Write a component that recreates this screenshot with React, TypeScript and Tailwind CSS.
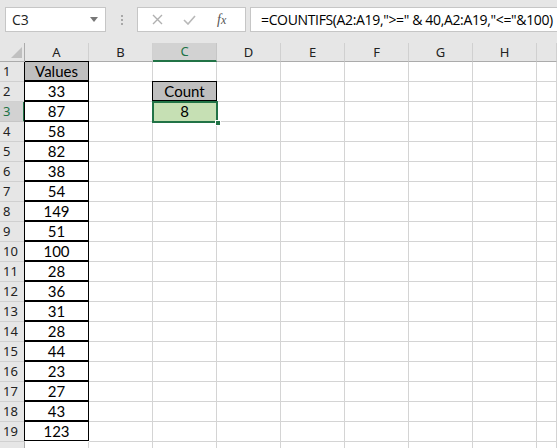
import React from "react";

const cols = ["A", "B", "C", "D", "E", "F", "G", "H", ""];
const values = [33, 87, 58, 82, 38, 54, 149, 51, 100, 28, 36, 31, 28, 44, 23, 27, 43, 123];

function Cell({ r, c }: { r: number; c: number }) {
  let content: React.ReactNode = null;
  let cls = "border-r border-b border-[#d4d4d4] bg-white";
  if (c === 0) {
    if (r === 1) {
      content = "Values";
      cls = "border border-black bg-[#bfbfbf] -ml-px -mt-px";
    } else {
      content = values[r - 2];
      cls = "border border-black bg-white -ml-px -mt-px";
    }
  }
  if (c === 2 && r === 2) {
    content = "Count";
    cls = "border border-black bg-[#bfbfbf] -ml-px -mt-px";
  }
  if (c === 2 && r === 3) {
    content = "8";
    cls = "border-r border-b border-[#d4d4d4] bg-[#c6e0b4]";
  }
  return (
    <div className={`h-5 flex items-center justify-center text-[15px] text-black leading-none ${cls}`} style={{ fontFamily: "Lato, 'Open Sans', sans-serif" }}>
      {content}
    </div>
  );
}

export default function App() {
  const rows = Array.from({ length: 20 }, (_, i) => i + 1);
  return (
    <div className="w-[557px] h-[448px] overflow-hidden bg-white relative" style={{ fontFamily: "'Noto Sans', 'Open Sans', sans-serif" }}>
      {/* toolbar */}
      <div className="h-[43px] bg-[#e6e6e6] flex items-start pt-[7px] pl-[5px]">
        <div className="w-[101px] h-[25px] bg-white border border-[#c6c6c6] flex items-center justify-between pl-[6px] pr-[7px]">
          <span className="text-[14px] text-[#222]" style={{ fontFamily: "'Open Sans', sans-serif" }}>C3</span>
          <svg width="8" height="5" viewBox="0 0 8 5"><path d="M0 0 L8 0 L4 5 Z" fill="#777" /></svg>
        </div>
        <div className="w-[31px] h-[25px] flex flex-col items-center justify-center gap-[2px]">
          <div className="w-[2px] h-[2px] bg-[#a8a8a8]" />
          <div className="w-[2px] h-[2px] bg-[#a8a8a8]" />
          <div className="w-[2px] h-[2px] bg-[#a8a8a8]" />
        </div>
        <div className="w-[109px] h-[25px] bg-white border border-[#c6c6c6] flex items-center">
          <svg className="ml-[14px]" width="11" height="11" viewBox="0 0 11 11"><path d="M1 1 L10 10 M10 1 L1 10" stroke="#b0b0b0" strokeWidth="1.4" /></svg>
          <svg className="ml-[20px]" width="13" height="10" viewBox="0 0 13 10"><path d="M1 5 L5 9 L12 1" stroke="#b8b8b8" strokeWidth="1.6" fill="none" /></svg>
          <span className="ml-[21px] text-[14px] italic text-[#555]" style={{ fontFamily: "'Liberation Serif', serif" }}>f<span className="text-[12px]">x</span></span>
        </div>
        <div className="ml-[4px] flex-1 h-[25px] bg-white border border-[#c6c6c6] border-r-0 flex items-center pl-[10px]">
          <span className="text-[14px] text-black whitespace-nowrap" style={{ fontFamily: "'Open Sans', sans-serif", letterSpacing: "-0.35px" }}>=COUNTIFS(A2:A19,"&gt;=" &amp; 40,A2:A19,"&lt;="&amp;100)</span>
        </div>
      </div>

      {/* grid */}
      <div className="grid grid-cols-[25px_repeat(8,64px)_20px] grid-rows-[19px_repeat(20,20px)]">
        {/* corner */}
        <div className="bg-[#e6e6e6] border-r border-b border-[#ababab] relative">
          <svg className="absolute right-[2px] bottom-[3px]" width="11" height="11" viewBox="0 0 11 11"><path d="M11 0 L11 11 L0 11 Z" fill="#c0c0c0" /></svg>
        </div>
        {cols.map((c, i) => (
          <div
            key={"h" + i}
            className={
              i === 2
                ? "bg-[#d2d2d2] border-r border-[#c6c6c6] border-b-2 border-b-[#217346] flex items-center justify-center text-[13px] text-[#217346] leading-none"
                : "bg-[#e6e6e6] border-r border-[#d0d0d0] border-b border-b-[#ababab] flex items-center justify-center text-[13px] text-[#222] leading-none"
            }
          >
            {c}
          </div>
        ))}
        {rows.map((r) => (
          <React.Fragment key={r}>
            <div
              className={
                r === 3
                  ? "bg-[#d2d2d2] border-r-2 border-r-[#217346] border-b border-[#c6c6c6] flex items-center pl-[3px] text-[13px] text-[#217346] leading-none"
                  : r === 20
                  ? "bg-[#e6e6e6] border-r border-[#ababab] border-b border-b-[#d0d0d0]"
                  : "bg-[#e6e6e6] border-r border-[#ababab] border-b border-b-[#d0d0d0] flex items-center pl-[3px] text-[13px] text-[#222] leading-none"
              }
            >
              {r === 20 ? "" : r}
            </div>
            {cols.map((_, c) =>
              r <= 19 && (c === 0 || c === 2) ? (
                c === 0 || r === 2 || r === 3 ? (
                  <Cell key={c} r={r} c={c} />
                ) : (
                  <div key={c} className="border-r border-b border-[#d4d4d4]" />
                )
              ) : (
                <div key={c} className="border-r border-b border-[#d4d4d4]" />
              )
            )}
          </React.Fragment>
        ))}
      </div>

      {/* selection */}
      <div className="absolute left-[152px] top-[101px] w-[66px] h-[22px] border-2 border-[#217346] pointer-events-none" />
      <div className="absolute left-[215px] top-[120px] w-[6px] h-[6px] bg-[#217346] border border-white" />
    </div>
  );
}
